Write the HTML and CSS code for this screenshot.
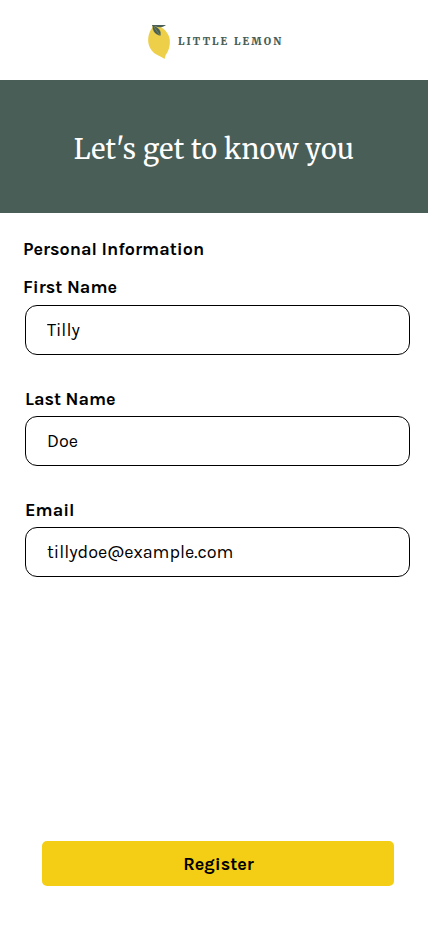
FILE: index.html
```html
<!DOCTYPE html>
<html lang="en">
<head>
<meta charset="utf-8">
<meta name="viewport" content="width=device-width, initial-scale=1">
<title>Little Lemon</title>
<link rel="stylesheet" href="styles.css">
</head>
<body>
<div class="screen">
  <header class="header">
    <svg class="lemon" width="24" height="36" viewBox="0 0 24 36" aria-hidden="true">
      <path fill="#edcf49" d="M6 3C3 6 1 11 1.200 17C1.400 23 5 28 9.500 30.500C13 32.400 15 33 17.500 35L18.700 31C21.500 27.500 23.200 22 22.800 16C22.400 10.500 18.500 5.500 13.500 3Z"/>
      <path fill="#495e57" stroke="#edcf49" stroke-width=".4" d="M5.500 1.300C5 6 7 10.500 13.500 12C15 7.500 12 3 5.500 1.300Z"/>
      <path fill="#495e57" d="M5 1H19C16 3.600 11.500 3.800 8.500 2.600L5.300 2Z"/>
      <path fill="none" stroke="#9da85a" stroke-width=".5" d="M7 3L13 11.500"/>
    </svg>
    <span class="brand">LITTLE LEMON</span>
  </header>
  <section class="hero"><h1 class="title">Let's get to know you</h1></section>
  <form class="form">
    <h2 class="section-title">Personal Information</h2>
    <div class="field">
      <label class="label label-first" for="first">First Name</label>
      <input class="input" id="first" type="text" value="Tilly">
    </div>
    <div class="field">
      <label class="label label-last" for="last">Last Name</label>
      <input class="input" id="last" type="text" value="Doe">
    </div>
    <div class="field">
      <label class="label label-email" for="email">Email</label>
      <input class="input" id="email" type="email" value="tillydoe@example.com">
    </div>
    <button class="register" type="button">Register</button>
  </form>
</div>
</body>
</html>
```
FILE: styles.css
```css
* { box-sizing: border-box; }
body { margin: 0; background: #fff; color: #000; font-family: Karla, Roboto, sans-serif; }
.screen { width: 428px; height: 926px; display: flex; flex-direction: column; overflow: hidden; }
.header { height: 80px; padding: 24px 0 0 147px; display: flex; align-items: flex-start; }
.lemon { display: block; flex: none; }
.brand { margin: 10px 0 0 7px; font: 900 10px/16px Merriweather, "DejaVu Serif Condensed", "DejaVu Serif", serif; letter-spacing: 2.15px; color: #495e57; white-space: nowrap; }
.hero { height: 133px; background: #495e57; display: flex; align-items: center; justify-content: center; padding-top: 4px; }
.title { margin: 0; color: #fff; font: 400 27px/36px Merriweather, "DejaVu Serif Condensed", "DejaVu Serif", serif; letter-spacing: .25px; white-space: nowrap; }
.form { flex: 1; display: flex; flex-direction: column; padding: 24px 18px 40px 25px; }
.section-title { margin: 0 0 14px -2px; font-size: 18px; line-height: 24px; font-weight: 700; }
.field { height: 111px; display: flex; flex-direction: column; align-items: flex-start; }
.field:nth-of-type(1) { height: 112px; }
.label { height: 30px; font-size: 18px; line-height: 24px; font-weight: 700; }
.label-first { margin-left: -2px; }
.label-last, .label-email { height: 29px; }
.input { width: 385px; height: 50px; padding: 0 21px; border: 1px solid #000; border-radius: 12px; background: #fff; color: #000; font: 400 18px/24px Karla, Roboto, sans-serif; outline: none; }
.register { margin: auto 16px 0 17px; padding: 0 0 0 1px; width: 352px; height: 45px; flex: none; border: 0; border-radius: 5px; background: #f4ce14; color: #000; font: 700 18px/24px Karla, Roboto, sans-serif; }
```
